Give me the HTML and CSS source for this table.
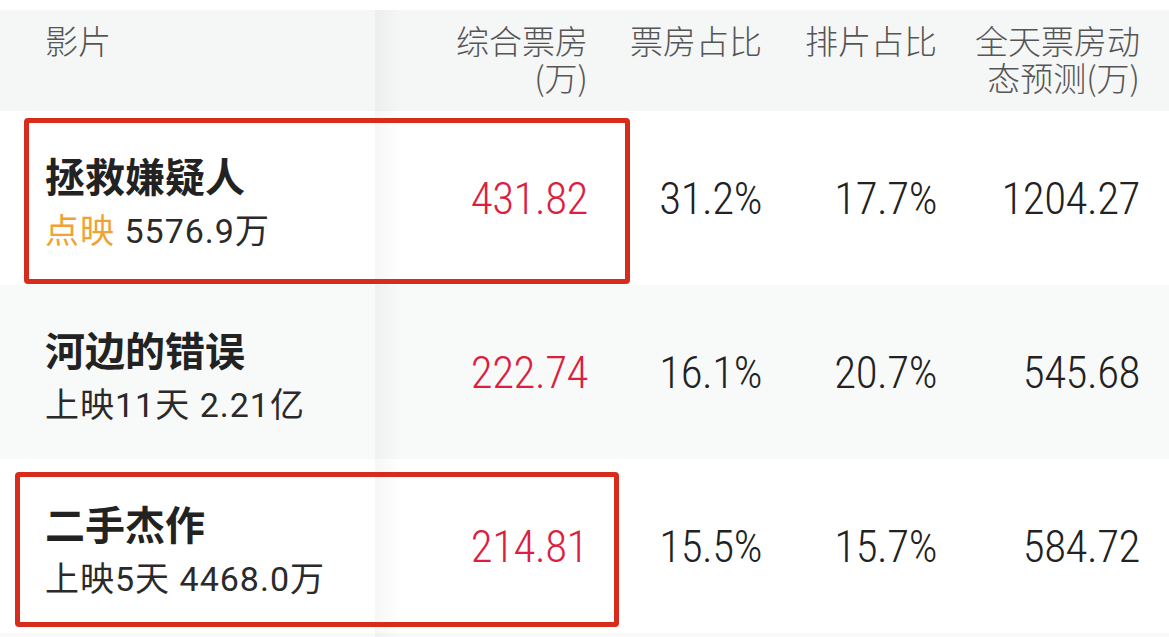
FILE: index.html
```html
<!DOCTYPE html>
<html lang="zh">
<head>
<meta charset="utf-8">
<title>票房</title>
<link rel="stylesheet" href="styles.css">
</head>
<body>
<div class="board">
  <div class="row head">
    <div class="cell label">影片</div>
    <div class="cell num first">综合票房<br>(万)</div>
    <div class="cell num">票房占比</div>
    <div class="cell num">排片占比</div>
    <div class="cell num">全天票房动<br>态预测(万)</div>
  </div>

  <div class="row">
    <div class="cell name">
      <div class="title">拯救嫌疑人</div>
      <div class="sub"><span class="tag">点映</span> 5576.9万</div>
    </div>
    <div class="cell num first val red">431.82</div>
    <div class="cell num val">31.2%</div>
    <div class="cell num val">17.7%</div>
    <div class="cell num val">1204.27</div>
    <div class="mark mark-a"></div>
  </div>

  <div class="row alt">
    <div class="cell name">
      <div class="title">河边的错误</div>
      <div class="sub">上映11天 2.21亿</div>
    </div>
    <div class="cell num first val red">222.74</div>
    <div class="cell num val">16.1%</div>
    <div class="cell num val">20.7%</div>
    <div class="cell num val">545.68</div>
  </div>

  <div class="row">
    <div class="cell name">
      <div class="title">二手杰作</div>
      <div class="sub">上映5天 4468.0万</div>
    </div>
    <div class="cell num first val red">214.81</div>
    <div class="cell num val">15.5%</div>
    <div class="cell num val">15.7%</div>
    <div class="cell num val">584.72</div>
    <div class="mark mark-b"></div>
  </div>

  <div class="row alt tail">
    <div class="cell"></div>
    <div class="cell first"></div>
    <div class="cell"></div>
    <div class="cell"></div>
    <div class="cell"></div>
  </div>
</div>
</body>
</html>
```

FILE: styles.css
```css
* { box-sizing: border-box; }

html, body {
  margin: 0;
  padding: 0;
  background: #ffffff;
  overflow: hidden;
}

body {
  font-family: Roboto, "Noto Sans CJK SC", sans-serif;
  color: #222222;
}

.board {
  width: 1169px;
  padding-top: 10px;
}

.row {
  position: relative;
  display: grid;
  grid-template-columns: 375px 213px 174px 175px 203px;
  padding-right: 29px;
  height: 174px;
  background: #ffffff;
}

.row.alt { background: #f8f9f9; }

.row.head {
  height: 101px;
  background: #f5f6f6;
}

.row.tail { height: 4px; }

.cell {
  display: flex;
  align-items: center;
}

.cell.num {
  justify-content: flex-end;
  text-align: right;
}

.cell.first {
  background-image: linear-gradient(90deg, rgba(0, 0, 0, 0.035), rgba(0, 0, 0, 0) 26px);
}

.head .cell {
  align-items: flex-start;
  padding-top: 12px;
  font-family: "Noto Sans CJK SC", sans-serif;
  font-size: 33px;
  line-height: 37px;
  color: #555555;
  font-weight: 300;
}

.head .cell.label { padding-left: 45px; }

.cell.name {
  flex-direction: column;
  align-items: flex-start;
  justify-content: center;
  padding-left: 45px;
  padding-top: 7px;
}

.title {
  font-family: "Noto Sans CJK SC", sans-serif;
  font-weight: 700;
  font-size: 40px;
  line-height: 50px;
  color: #222222;
}

.sub {
  margin-top: 9px;
  font-family: Roboto, "Noto Sans CJK SC", sans-serif;
  font-size: 34px;
  line-height: 44px;
  letter-spacing: 1px;
  color: #2a2a2a;
}

.tag { color: #f0a233; }

.val {
  font-family: "Roboto Condensed", "Liberation Sans Narrow", Roboto, sans-serif;
  font-weight: 350;
  font-size: 45px;
  letter-spacing: -0.5px;
  color: #222222;
}

.val.red { color: #dc1f3f; }

.mark {
  position: absolute;
  border: 5px solid #d72c1b;
  border-radius: 4px;
  pointer-events: none;
}

.mark-a {
  left: 24px;
  top: 7px;
  width: 606px;
  height: 166px;
}

.mark-b {
  left: 15px;
  top: 13px;
  width: 604px;
  height: 155px;
}
```
